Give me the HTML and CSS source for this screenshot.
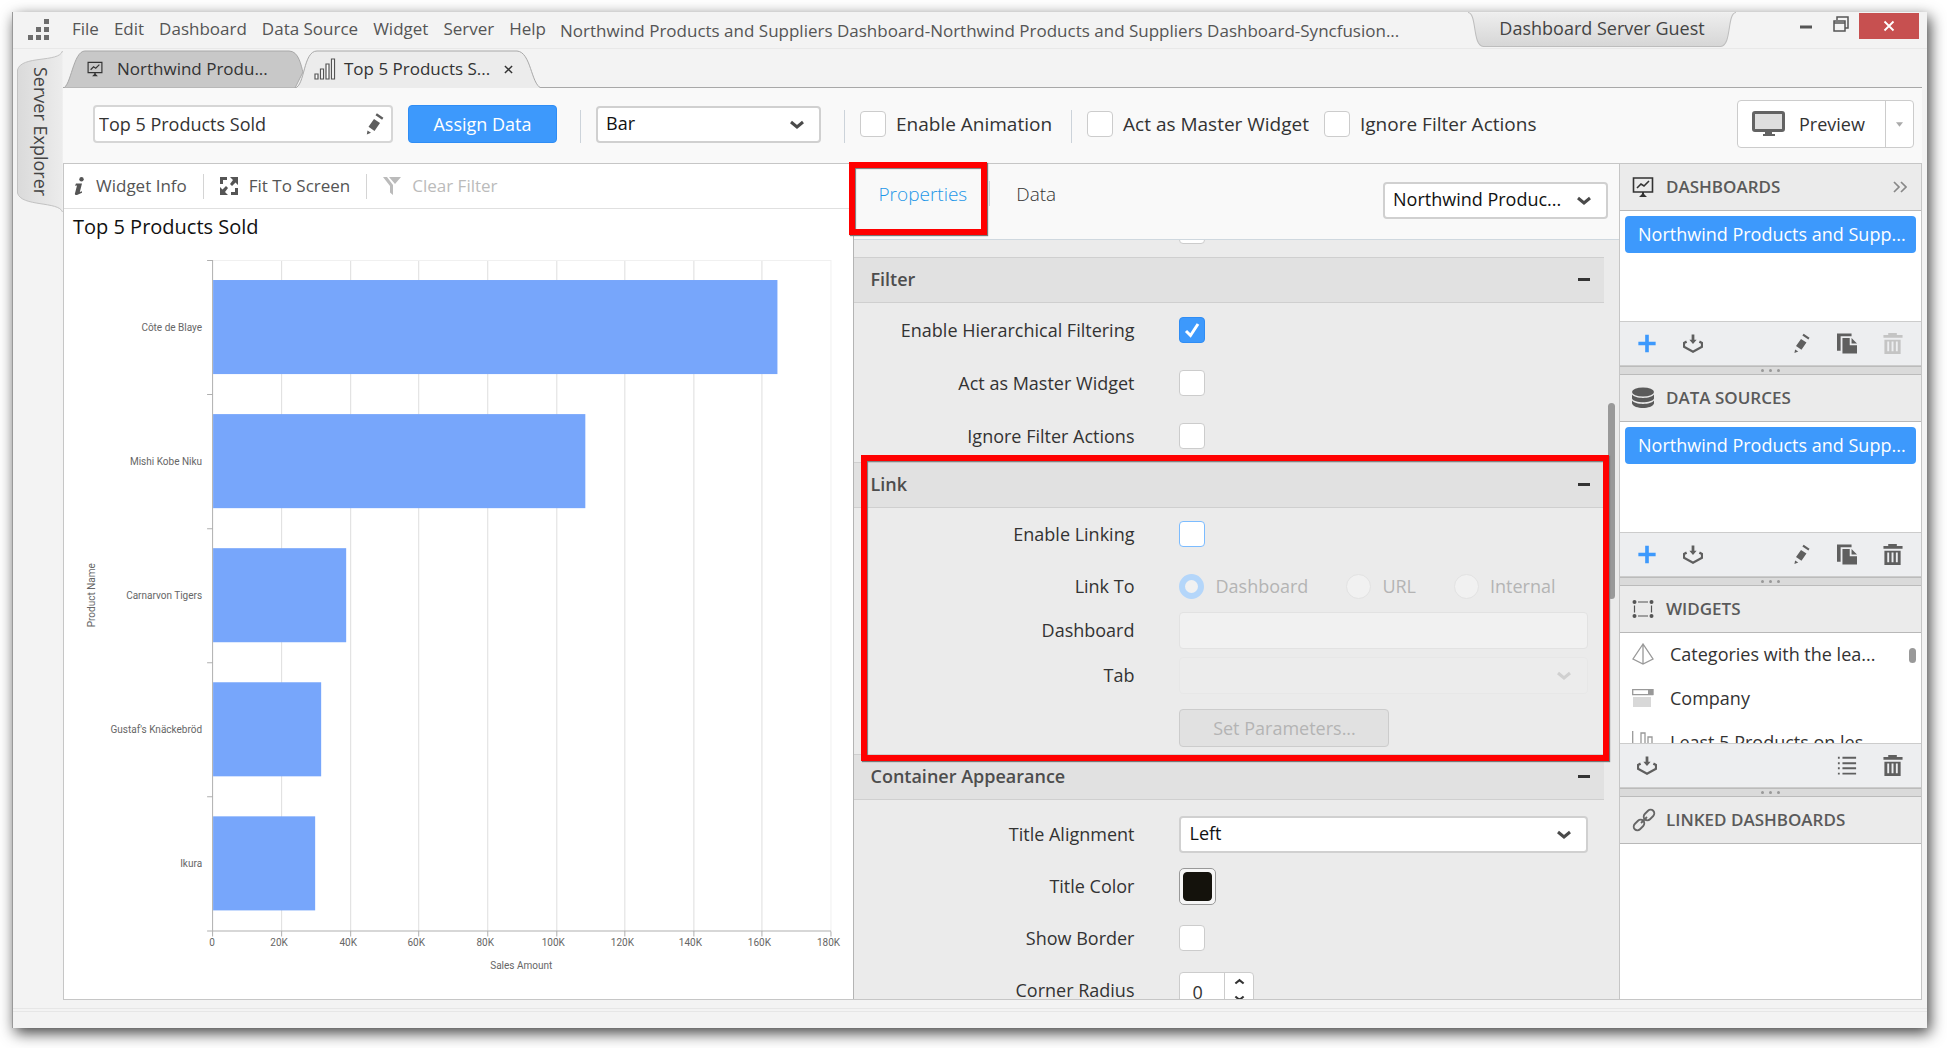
FILE: index.html
```html
<!DOCTYPE html>
<html lang="en">
<head>
<meta charset="utf-8">
<title>Northwind Products and Suppliers Dashboard</title>
<link rel="stylesheet" href="styles.css">
</head>
<body>
<svg class="defs" aria-hidden="true">
  <symbol id="chevron" viewBox="0 0 16 10"><path d="M2 2l6 5 6-5" fill="none" stroke="currentColor" stroke-width="3"/></symbol>
  <symbol id="board" viewBox="0 0 22 22"><path d="M1.500 2h19v14h-19z" fill="none" stroke="currentColor" stroke-width="1.600"/><path d="M5 12l4-4 3 2 5-5" fill="none" stroke="currentColor" stroke-width="1.600"/><path d="M10 16h2v2l3 3H7l3-3z" fill="currentColor"/></symbol>
  <symbol id="pencil" viewBox="0 0 22 22"><path d="M11 6l6 4-5.500 8-6-4.200zM12.500 2.200l1.400-1.900 6.500 4.400-1.300 2zM4.500 17.500l3.500 2.200L3.800 21.500z" fill="currentColor"/></symbol>
  <symbol id="plus" viewBox="0 0 22 22"><path d="M11 1.500v19M1.500 11h19" stroke="currentColor" stroke-width="4" fill="none"/></symbol>
  <symbol id="import" viewBox="0 0 22 22"><path d="M4 9l-3 1.500v4L11 20l10-5.500v-4L18 9" fill="none" stroke="currentColor" stroke-width="2.600"/><path d="M9.500 1h3v6h2.500l-4 4.500L7 7h2.500z" fill="currentColor"/></symbol>
  <symbol id="copy" viewBox="0 0 22 22"><path d="M0 0h16v3H4v16H0z" fill="currentColor"/><path d="M6 5h8v8h8v9H6zM16 5l6 6h-6z" fill="currentColor"/></symbol>
  <symbol id="trash" viewBox="0 0 20 22"><path d="M0 2h5V0h9v2h6v3H0zM1 7h17v15H1zM4 9v10h2V9zm4.500 0v10h2V9zm4.500 0v10h2V9z" fill="currentColor" fill-rule="evenodd"/></symbol>
</svg>
<div class="window">
  <header class="titlebar">
    <svg class="logo" viewBox="0 0 22 22" aria-hidden="true"><path d="M16 0h5v5h-5zM8 8h5v5H8zM16 8h5v5h-5zM0 16h5v5H0zM8 16h5v5H8zM16 16h5v5h-5z" fill="#6d6d6d"/></svg>
    <nav class="menu">
      <button>File</button><button>Edit</button><button>Dashboard</button><button>Data Source</button><button>Widget</button><button>Server</button><button>Help</button>
    </nav>
    <h1 class="title">Northwind Products and Suppliers Dashboard-Northwind Products and Suppliers Dashboard-Syncfusion...</h1>
    <button class="account">
      <svg viewBox="0 0 262 34" preserveAspectRatio="none" aria-hidden="true"><defs><linearGradient id="ga" x2="0" y2="1"><stop offset="0" stop-color="#eeeeee"/><stop offset="1" stop-color="#d6d6d6"/></linearGradient></defs><path d="M0 .5C9 1 4 33 15 33.500H247C258 33 253 1 262 .5" fill="url(#ga)" stroke="#bdbdbd"/></svg>
      <span>Dashboard Server Guest</span>
    </button>
    <div class="controls">
      <button class="ctl" aria-label="Minimize"><svg viewBox="0 0 16 16"><path d="M2 11h12" stroke="#555" stroke-width="3"/></svg></button>
      <button class="ctl" aria-label="Restore"><svg viewBox="0 0 16 16"><path d="M1 5h11v10H1zM1 7h11M4 4V1h11v11h-3" fill="none" stroke="#555" stroke-width="1.500"/></svg></button>
      <button class="ctl close" aria-label="Close"><svg viewBox="0 0 16 16"><path d="M3.500 3.500l9 9M12.500 3.500l-9 9" stroke="#fff" stroke-width="1.800"/></svg></button>
    </div>
  </header>

  <div class="shell">
    <aside class="rail">
      <button class="explorer">
        <svg viewBox="0 0 46 162" preserveAspectRatio="none" aria-hidden="true"><defs><linearGradient id="gb"><stop offset="0" stop-color="#dadada"/><stop offset="1" stop-color="#ececec"/></linearGradient></defs><path d="M45.500 0C42 12 4 4 .5 19V142C4 156 42 150 45.500 161" fill="url(#gb)" stroke="#c2c2c2"/></svg>
        <span>Server Explorer</span>
      </button>
    </aside>
    <main class="work">
      <nav class="tabs">
        <button class="tab">
          <svg class="shape" viewBox="0 0 240 38" preserveAspectRatio="none" aria-hidden="true"><path d="M0 38C8 37 10 1 22 1H226C236 1 238 16 240 22L232 38z" fill="#c8c8c8" stroke="#a8a8a8"/></svg>
          <svg class="ic16" aria-hidden="true"><use href="#board"/></svg><span>Northwind Produ...</span>
        </button>
        <button class="tab active">
          <svg class="shape" viewBox="0 0 246 38" preserveAspectRatio="none" aria-hidden="true"><path d="M0 38C10 36 8 1 22 1H222C236 2 236 34 246 38" fill="#ececec" stroke="#a8a8a8"/></svg>
          <svg class="ic22" viewBox="0 0 22 22" aria-hidden="true"><path d="M1 16h3v5H1zM6.500 11h3v10h-3zM12 6h3v15h-3zM17.500 1h3v20h-3z" fill="#fff" stroke="#555" stroke-width="1.200"/></svg><span>Top 5 Products S...</span>
          <svg class="x" viewBox="0 0 10 10" aria-hidden="true"><path d="M1 1l8 8M9 1l-8 8" stroke="#333" stroke-width="1.600"/></svg>
        </button>
      </nav>

      <div class="toolbar">
        <div class="namebox"><input type="text" value="Top 5 Products Sold" aria-label="Widget name"><svg class="ic18" aria-hidden="true"><use href="#pencil"/></svg></div>
        <button class="primary">Assign Data</button>
        <i class="sep"></i>
        <div class="select type"><select aria-label="Widget type"><option>Bar</option></select><svg aria-hidden="true"><use href="#chevron"/></svg></div>
        <i class="sep"></i>
        <label class="check"><input type="checkbox">Enable Animation</label>
        <i class="sep"></i>
        <label class="check"><input type="checkbox">Act as Master Widget</label>
        <label class="check next"><input type="checkbox">Ignore Filter Actions</label>
        <div class="preview">
          <button class="go"><svg viewBox="0 0 34 26" aria-hidden="true"><rect x="1.500" y="1.500" width="30" height="18" rx="1.500" fill="#dedede" stroke="#636363" stroke-width="3"/><path d="M13 20h7v3h3v2H11v-2h2z" fill="#636363"/></svg>Preview</button>
          <button class="more" aria-label="Preview options"><svg viewBox="0 0 8 5" aria-hidden="true"><path d="M0 0h8L4 5z" fill="#aaa"/></svg></button>
        </div>
      </div>

      <div class="columns">
        <section class="canvas">
          <div class="canvasbar">
            <button><svg class="info" viewBox="0 0 11 18" aria-hidden="true"><circle cx="7.500" cy="2.300" r="2.200" fill="#555"/><path d="M2 6.500h6L5.800 15l2.200-.8v1.500L3 18H1.500L.8 17 3 8.500l-2 .3z" fill="#555"/></svg>Widget Info</button>
            <i class="bar"></i>
            <button><svg class="fit" viewBox="0 0 18 18" aria-hidden="true"><path d="M0 0h7v3H3v4H0zM18 18h-7v-3h4v-4h3zM10 0h8v8l-2.500-2.500L12 9l-2-2 3-4zM8 18H0v-8l2.500 2.500L6 9l2 2-3 4z" fill="#555"/></svg>Fit To Screen</button>
            <i class="bar"></i>
            <button disabled><svg class="fit" viewBox="0 0 18 18" aria-hidden="true"><path d="M0 0h4l6 8v10l-3-2.500V9zM6 0h12l-6 7z" fill="#bbb"/></svg>Clear Filter</button>
          </div>
          <h2>Top 5 Products Sold</h2>
          <svg class="chart" viewBox="0 0 789 750" role="img" aria-label="Sales Amount by Product Name">
            <path d="M217.500 12v670M286.500 12v670M354.500 12v670M423.500 12v670M492.500 12v670M560.500 12v670M629.500 12v670M697.500 12v670" stroke="#dedede"/>
            <path d="M149 11.500h617.500V682" stroke="#f0f0f0" fill="none"/>
            <path d="M143 11.500h6M143 145.500h6M143 279.500h6M143 413.500h6M143 547.500h6M143 681.500h623.500M148.500 11v676M217.500 682v5M286.500 682v5M354.500 682v5M423.500 682v5M492.500 682v5M560.500 682v5M629.500 682v5M697.500 682v5M766.500 682v5" stroke="#b0b0b0" fill="none"/>
            <g fill="#77a6fb"><rect x="149" y="31" width="564" height="94"/><rect x="149" y="165" width="372" height="94"/><rect x="149" y="299" width="133" height="94"/><rect x="149" y="433" width="108" height="94"/><rect x="149" y="567" width="102" height="94"/></g>
            <g text-anchor="end"><text x="138" y="82">Côte de Blaye</text><text x="138" y="216">Mishi Kobe Niku</text><text x="138" y="350">Carnarvon Tigers</text><text x="138" y="484">Gustaf's Knäckebröd</text><text x="138" y="618">Ikura</text></g>
            <g text-anchor="middle"><text x="148" y="697">0</text><text x="215" y="697">20K</text><text x="284" y="697">40K</text><text x="352" y="697">60K</text><text x="421" y="697">80K</text><text x="489" y="697">100K</text><text x="558" y="697">120K</text><text x="626" y="697">140K</text><text x="695" y="697">160K</text><text x="764" y="697">180K</text><text x="457" y="720">Sales Amount</text><text transform="translate(31 346) rotate(-90)">Product Name</text></g>
          </svg>
        </section>

        <section class="props">
          <div class="propsbar">
            <button class="ptab on">Properties<span class="mark"></span></button>
            <i class="bar"></i>
            <button class="ptab">Data</button>
            <div class="select source"><select aria-label="Data source"><option>Northwind Produc...</option></select><svg aria-hidden="true"><use href="#chevron"/></svg></div>
          </div>
          <div class="scroll">
            <div class="row prev"><span></span><input type="checkbox" aria-label="Previous option"></div>
            <section class="group">
              <h3>Filter<i></i></h3>
              <div class="row tall"><label for="p1">Enable Hierarchical Filtering</label><input type="checkbox" id="p1" checked></div>
              <div class="row tall"><label for="p2">Act as Master Widget</label><input type="checkbox" id="p2"></div>
              <div class="row tall"><label for="p3">Ignore Filter Actions</label><input type="checkbox" id="p3"></div>
            </section>
            <section class="group link">
              <h3>Link<i></i></h3>
              <div class="row"><label for="p4">Enable Linking</label><input type="checkbox" id="p4" class="focus"></div>
              <div class="row"><span>Link To</span><div class="radios"><label><input type="radio" name="to" checked disabled>Dashboard</label><label><input type="radio" name="to" disabled>URL</label><label><input type="radio" name="to" disabled>Internal</label></div></div>
              <div class="row low"><label for="p5">Dashboard</label><input type="text" id="p5" class="field" disabled></div>
              <div class="row low"><label for="p6">Tab</label><div class="select off"><select id="p6" disabled><option></option></select><svg aria-hidden="true"><use href="#chevron"/></svg></div></div>
              <div class="row"><span></span><button class="params" disabled>Set Parameters...</button></div>
              <span class="mark"></span>
            </section>
            <section class="group appearance">
              <h3>Container Appearance<i></i></h3>
              <div class="rows">
                <div class="row"><label for="p7">Title Alignment</label><div class="select"><select id="p7"><option>Left</option></select><svg aria-hidden="true"><use href="#chevron"/></svg></div></div>
                <div class="row"><label for="p8">Title Color</label><input type="color" id="p8" value="#14120c"></div>
                <div class="row"><label for="p9">Show Border</label><input type="checkbox" id="p9"></div>
                <div class="row"><label for="p10">Corner Radius</label><div class="spin"><input type="text" id="p10" value="0"><div><button aria-label="Increase"><svg class="flip" aria-hidden="true"><use href="#chevron"/></svg></button><button aria-label="Decrease"><svg aria-hidden="true"><use href="#chevron"/></svg></button></div></div></div>
              </div>
            </section>
            <span class="thumb"></span>
          </div>
        </section>

        <aside class="side">
          <section class="pane">
            <h3><svg class="ic22" aria-hidden="true"><use href="#board"/></svg>DASHBOARDS<button class="collapse" aria-label="Collapse"><svg viewBox="0 0 14 12"><path d="M1 1l5 5-5 5M8 1l5 5-5 5" fill="none" stroke="#888" stroke-width="1.700"/></svg></button></h3>
            <div class="list"><button class="item">Northwind Products and Supp...</button></div>
            <div class="tools"><button class="add" aria-label="Add"><svg><use href="#plus"/></svg></button><button aria-label="Import"><svg><use href="#import"/></svg></button><button class="push" aria-label="Edit"><svg><use href="#pencil"/></svg></button><button aria-label="Copy"><svg><use href="#copy"/></svg></button><button disabled aria-label="Delete"><svg><use href="#trash"/></svg></button></div>
          </section>
          <div class="split"><i></i><i></i><i></i></div>
          <section class="pane">
            <h3><svg class="ic22" viewBox="0 0 22 22" aria-hidden="true"><g fill="#5a5a5a"><ellipse cx="11" cy="5" rx="11" ry="4.500"/><path d="M0 7.500c3 4.500 19 4.500 22 0v4c-2 5-20 5-22 0zM0 13.500c3 4.500 19 4.500 22 0v3c-2 6-20 6-22 0z"/></g></svg>DATA SOURCES</h3>
            <div class="list"><button class="item">Northwind Products and Supp...</button></div>
            <div class="tools"><button class="add" aria-label="Add"><svg><use href="#plus"/></svg></button><button aria-label="Import"><svg><use href="#import"/></svg></button><button class="push" aria-label="Edit"><svg><use href="#pencil"/></svg></button><button aria-label="Copy"><svg><use href="#copy"/></svg></button><button aria-label="Delete"><svg><use href="#trash"/></svg></button></div>
          </section>
          <div class="split"><i></i><i></i><i></i></div>
          <section class="pane">
            <h3><svg class="ic22" viewBox="0 0 22 22" aria-hidden="true"><g fill="#555"><circle cx="2.500" cy="4" r="2"/><circle cx="19.500" cy="4" r="2"/><circle cx="2.500" cy="18" r="2"/><circle cx="19.500" cy="18" r="2"/></g><path d="M6 4h10M6 18h10M2.500 7.500v7M19.500 7.500v7" stroke="#555" stroke-width="1.200"/></svg>WIDGETS</h3>
            <ul class="widgets">
              <li><svg class="ic22" viewBox="0 0 22 22" aria-hidden="true"><path d="M11 1L1 16l10 5 10-5zM11 1v20" fill="none" stroke="#999" stroke-width="1.300"/></svg>Categories with the lea...</li>
              <li><svg class="ic22" viewBox="0 0 22 22" aria-hidden="true"><path d="M.7 2.700h20v5h-20z" fill="#fff" stroke="#999" stroke-width="1.300"/><path d="M16 2h5.500v6H16z" fill="#999"/><path d="M1 10h18v10H1z" fill="#d8d8d8"/></svg>Company</li>
              <li><svg class="ic22" viewBox="0 0 22 22" aria-hidden="true"><path d="M.7 0v21h21M9 20V2h4v18M16 20V6h4v14" fill="none" stroke="#999" stroke-width="1.300"/></svg>Least 5 Products on les...</li>
            </ul>
            <div class="tools"><button aria-label="Import"><svg><use href="#import"/></svg></button><button class="push" aria-label="List"><svg viewBox="0 0 22 22"><path d="M1 2.500h2M6 2.500h15M1 8.500h2M6 8.500h15M1 14h2M6 14h15M1 20h2M6 20h15" stroke="currentColor" stroke-width="2"/></svg></button><button aria-label="Delete"><svg><use href="#trash"/></svg></button></div>
          </section>
          <div class="split"><i></i><i></i><i></i></div>
          <section class="pane grow">
            <h3><svg class="ic24" viewBox="0 0 24 24" aria-hidden="true"><g fill="none" stroke="#666" stroke-width="1.800"><rect x="-6" y="-3.700" width="12" height="7.400" rx="3.700" transform="translate(17 7) rotate(-45)"/><rect x="-6" y="-3.700" width="12" height="7.400" rx="3.700" transform="translate(7 17) rotate(-45)"/><path d="M9 15l6-6"/></g></svg>LINKED DASHBOARDS</h3>
            <div class="list"></div>
          </section>
        </aside>
      </div>
    </main>
  </div>
  <footer class="status"></footer>
</div>
</body>
</html>
```

FILE: styles.css
```css
* { box-sizing: border-box; }
body {
  margin: 0;
  padding: 12px 20px 20px 12px;
  height: 100vh;
  overflow: hidden;
  background: #fff;
  color: #333;
  font: 18px/24px "Open Sans", "Noto Sans", sans-serif;
}
button, input, select { font: inherit; color: inherit; }
button { margin: 0; padding: 0; border: 0; background: none; white-space: nowrap; }
h1, h2, h3, ul { margin: 0; padding: 0; font-weight: 400; font-size: inherit; list-style: none; }
svg { display: block; flex: none; }
.defs { position: absolute; width: 0; height: 0; }
.ic16 { width: 16px; height: 16px; }
.ic18 { width: 22px; height: 22px; }
.ic22 { width: 22px; height: 22px; }
.ic24 { width: 24px; height: 24px; }

.window {
  display: flex;
  flex-direction: column;
  height: 100%;
  background: #f3f3f3;
  border-left: 1px solid #999;
  box-shadow: 3px 5px 14px rgba(0, 0, 0, .75);
}

/* title bar */
.titlebar {
  display: flex;
  align-items: flex-start;
  height: 37px;
  border-bottom: 1px solid #e8e8e8;
  color: #555;
}
.logo { width: 22px; height: 22px; margin: 7px 22px 0 15px; }
.menu { display: flex; gap: 15px; padding-top: 5px; font-size: 17px; }
.title { margin-left: 14px; padding-top: 7px; font-size: 17px; white-space: nowrap; }
.account { position: relative; width: 268px; height: 35px; padding-bottom: 3px; margin-left: auto; color: #444; }
.account svg { position: absolute; inset: 0; width: 100%; height: 100%; }
.account span { position: relative; }
.controls { display: flex; margin: 1px 8px 0 54px; }
.ctl { display: grid; place-items: center; width: 37px; height: 22px; }
.ctl svg { width: 16px; height: 16px; }
.ctl:first-child { width: 32px; }
.ctl.close { width: 60px; height: 26px; margin-left: 0; background: #c75050; }

.shell { display: flex; flex: 1; min-height: 0; }
.rail { width: 50px; padding: 2px 0 0 4px; }
.explorer { position: relative; width: 46px; height: 162px; color: #444; }
.explorer svg { position: absolute; inset: 0; width: 100%; height: 100%; }
.explorer span { position: relative; writing-mode: vertical-rl; display: block; margin: 0 12px; }
.work { display: flex; flex-direction: column; flex: 1; min-width: 0; margin-right: 5px; }

/* document tabs */
.tabs { display: flex; height: 39px; padding-top: 1px; border-bottom: 1px solid #a8a8a8; }
.tab { position: relative; display: flex; align-items: center; width: 240px; height: 38px; padding-left: 24px; font-size: 17px; }
.tab > * { position: relative; }
.tab .shape { position: absolute; inset: 0; width: 100%; height: 100%; }
.tab .ic16 { margin-right: 14px; }
.tab.active { width: 246px; margin-left: -8px; padding-left: 19px; }
.tab.active .ic22 { margin-right: 8px; }
.tab .x { width: 9px; height: 9px; margin-left: 14px; }

/* widget toolbar */
.toolbar { display: flex; align-items: center; height: 75px; padding: 0 8px 3px 30px; background: #f9f9f9; }
.namebox { display: flex; align-items: center; width: 300px; height: 38px; padding: 0 6px 0 4px; border: 2px solid #d6d6d6; border-radius: 4px; background: #fff; color: #5d5d5d; }
.namebox input { flex: 1; min-width: 0; padding: 0; border: 0; outline: 0; color: #333; }
.primary { width: 149px; height: 38px; margin-left: 15px; border: 1px solid #2f8df5; border-radius: 4px; background: #3d99fc; color: #fff; }
.sep { width: 1px; height: 33px; margin: 4px 15px 0 23px; background: #ccd3da; }
.select { position: relative; }
.select select { display: block; width: 100%; height: 37px; padding: 0 8px 3px; border: 2px solid #d0d0d0; border-radius: 4px; background: #fff; color: #111; appearance: none; }
.select svg { position: absolute; right: 16px; top: 14px; width: 16px; height: 10px; color: #4a4a4a; }
.select.type { width: 225px; }
.check { display: flex; align-items: center; gap: 10px; white-space: nowrap; font-size: 19px; }
.check + .sep { margin-left: 19px; }
.check.next { margin-left: 15px; }
input[type=checkbox] { appearance: none; flex: none; width: 26px; height: 26px; margin: 0; border: 1px solid #ccc; border-radius: 4px; background: #fff; }
input[type=checkbox].focus { border-color: #7cbcff; }
input[type=checkbox]:checked {
  border-color: #2f8df5;
  background: #3d99fc url("data:image/svg+xml,%3Csvg xmlns='http://www.w3.org/2000/svg' viewBox='0 0 24 24'%3E%3Cpath d='M6 13l4.500 4.500L18 6' fill='none' stroke='white' stroke-width='3'/%3E%3C/svg%3E");
}
.preview { display: flex; height: 48px; margin-left: auto; border: 1px solid #ccc; border-radius: 4px; background: #fff; }
.go { display: flex; align-items: center; gap: 13px; width: 147px; padding-left: 14px; }
.go svg { width: 34px; height: 26px; }
.more { display: grid; place-items: center; width: 28px; border-left: 1px solid #ccc; }
.more svg { width: 7px; height: 5px; }

.columns { display: grid; grid-template-columns: 791fr 766fr 301px; flex: 1; min-height: 0; border: 1px solid #c6c6c6; }
.columns > * { min-height: 0; min-width: 0; }

/* chart */
.canvas { background: #fff; border-right: 1px solid #b4b4b4; overflow: hidden; }
.canvasbar { display: flex; align-items: center; height: 45px; padding: 0 10px; border-bottom: 1px solid #e0e0e0; color: #555; font-size: 17px; }
.canvasbar button { display: flex; align-items: center; gap: 11px; }
.canvasbar button:disabled { color: #bbb; }
.bar { width: 1px; height: 25px; background: #ccd3da; }
.canvasbar .bar { margin: 0 16px; background: #d4d4d4; }
.info { width: 11px; height: 18px; }
.fit { width: 18px; height: 18px; }
.canvas h2 { padding: 5px 9px 0; height: 40px; color: #111; font-size: 20px; line-height: 26px; }
.chart { width: 100%; fill: #666; font: 10px Roboto, sans-serif; }

/* properties */
.props { display: flex; flex-direction: column; background: #ebebeb; border-right: 1px solid #c6c6c6; }
.propsbar { display: flex; align-items: center; height: 76px; flex: none; padding: 0 11px 16px 24px; border-bottom: 1px solid #cfd8df; background: #f9f9f9; }
.ptab { position: relative; font-size: 19px; font-weight: 300; }
.ptab.on { color: #1d97e8; }
.propsbar .bar { margin: 0 26px 0 22px; }
.mark { position: absolute; border: 6px solid #f00; box-shadow: 1px 1px 1px #777, inset 1px 1px 1px #777; pointer-events: none; }
.ptab .mark { left: -29px; right: -20px; top: -20px; height: 73px; z-index: 2; }
.source { width: 225px; margin: 13px 0 0 auto; }
.scroll { position: relative; flex: 1; min-height: 0; overflow: hidden; padding-right: 15px; }
.row { display: grid; grid-template-columns: 280px 1fr; column-gap: 45px; align-items: center; height: 52px; padding-right: 16px; }
.row > :first-child { text-align: right; }
.row.prev { height: 17px; grid-template-rows: 4px; align-items: end; }
.row.tall { height: 53px; }
.row.low { height: 45px; align-items: start; }
.row.low label { line-height: 36px; }
.group h3 { display: flex; align-items: center; justify-content: space-between; height: 46px; padding: 0 14px 2px 16px; border: 1px solid #cfcfcf; border-width: 1px 0; background: #e1e1e1; color: #4d4d4d; font-weight: 600; font-size: 18px; }
.group h3 i { width: 12px; height: 3px; background: #333; }
.link { position: relative; }
.link > .mark { left: 7px; right: -5px; top: -7px; bottom: -7px; z-index: 2; }
.radios { display: flex; color: #b4b4b4; }
.radios label { display: flex; align-items: center; gap: 11px; margin-right: 38px; }
input[type=radio] { appearance: none; width: 25px; height: 25px; margin: 0; border: 1px solid #e2e2e2; border-radius: 50%; background: #f1f1f1; }
input[type=radio]:checked { border: 6px solid #b4d6fa; }
.field { width: 100%; height: 37px; border: 1px solid #e2e2e2; border-radius: 4px; background: #f1f1f1; }
.off select { border-width: 1px; border-color: #e6e6e6; background: #ededed; }
.off svg { color: #d0d0d0; }
.params { width: 210px; height: 38px; border: 1px solid #ccc; border-radius: 4px; background: #e1e1e1; color: #b4b4b4; }
.rows { padding-top: 8px; }
input[type=color] { appearance: none; width: 37px; height: 37px; padding: 3px; border: 1px solid #999; border-radius: 5px; background: #f6f6f6; }
input[type=color]::-webkit-color-swatch-wrapper { padding: 0; }
input[type=color]::-webkit-color-swatch { border: 1px solid #14120c; border-radius: 4px; }
.spin { display: flex; width: 75px; height: 37px; border: 1px solid #ccc; border-radius: 4px; background: #fff; overflow: hidden; }
.spin input { width: 45px; padding: 4px 0 0 12px; border: 0; border-right: 1px solid #ccc; background: none; }
.spin div { display: grid; flex: 1; }
.spin button { display: grid; place-items: center; }
.spin svg { width: 11px; height: 7px; }
.flip { transform: rotate(180deg); }
.thumb { position: absolute; right: 4px; top: 163px; width: 7px; height: 196px; border-radius: 4px; background: #999; }

/* side panes */
.side { display: flex; flex-direction: column; background: #f3f3f3; }
.pane h3 { display: flex; align-items: center; gap: 12px; height: 47px; padding: 0 14px 0 12px; border-bottom: 1px solid #b8b8b8; background: #ebebeb; color: #5a5a5a; font-size: 17px; font-weight: 600; white-space: nowrap; }
.pane h3 .ic24 { margin-right: -2px; }
.pane h3 .ic22 { color: #333; }
.collapse { margin-left: auto; }
.collapse svg { width: 14px; height: 12px; }
.list { height: 110px; padding: 5px; background: #fff; }
.item { display: block; width: 100%; height: 37px; padding: 0 0 2px 13px; border-radius: 4px; background: #3d99fc; color: #fff; text-align: left; overflow: hidden; }
.tools { display: flex; align-items: center; gap: 26px; height: 45px; padding: 0 18px 0 17px; border: 1px solid #ccc; border-width: 1px 0; background: #edeef0; color: #5f5f5f; }
.tools svg { width: 20px; height: 21px; }
.tools .add { color: #3d99fc; }
.tools .push { margin-left: auto; }
.tools button:disabled { color: #c4c4c4; }
.split { display: flex; align-items: center; justify-content: center; gap: 5px; height: 9px; flex: none; border: 1px solid #bbb; border-width: 1px 0; background: #dadada; }
.split i { width: 3px; height: 3px; border-radius: 50%; background: #999; }
.widgets { position: relative; height: 110px; overflow: hidden; background: #fff; white-space: nowrap; }
.widgets::after { content: ""; position: absolute; right: 5px; top: 15px; width: 7px; height: 15px; border-radius: 4px; background: #999; }
.widgets li { display: flex; align-items: center; gap: 16px; height: 44px; padding: 0 0 2px 12px; }
.grow { display: flex; flex-direction: column; flex: 1; }
.grow h3 { flex: none; }
.grow .list { flex: 1; height: auto; }

.status { height: 28px; margin-bottom: 0; flex: none; border-top: 8px solid #f3f3f3; box-shadow: inset 0 1px #e6e6e6, inset 0 3px #f3f3f3, inset 0 4px #e6e6e6; }
```
